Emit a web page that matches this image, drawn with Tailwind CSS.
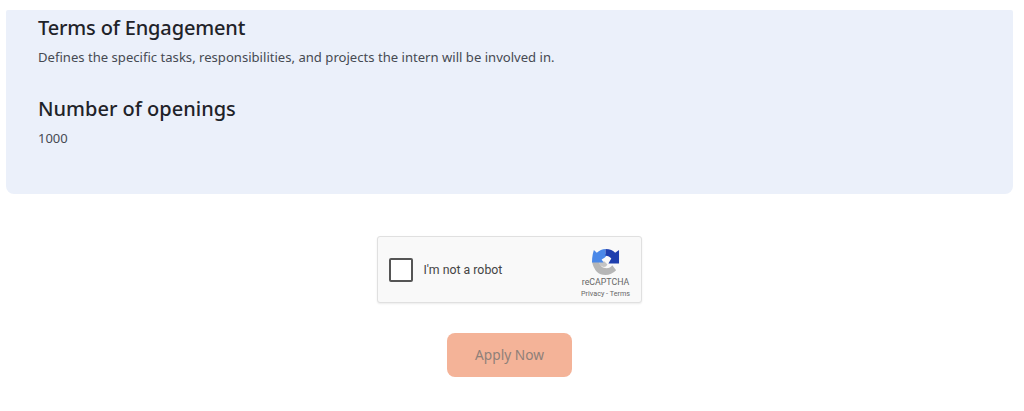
<!doctype html>
<html>
<head>
<meta charset="utf-8">
<script src="https://cdn.jsdelivr.net/npm/@tailwindcss/browser@4"></script>
</head>
<body class="bg-white">
<div class="w-[1024px] h-[411px] overflow-hidden pt-[10px] font-['Noto_Sans',sans-serif]">
  <div class="ml-[6px] w-[1007px] h-[184px] rounded-b-[8px] rounded-t-[2px] bg-[#ebf0fa] px-[32px] pt-[4px]">
    <h2 class="text-[20px] leading-[28px] font-medium tracking-[-0.16px] text-[#1f2329]">Terms of Engagement</h2>
    <p class="mt-[5px] text-[13.100px] leading-[20px] text-[#464a52]">Defines the specific tasks, responsibilities, and projects the intern will be involved in.</p>
    <h2 class="mt-[28px] text-[20px] leading-[28px] font-medium text-[#1f2329]">Number of openings</h2>
    <p class="mt-[5px] text-[13px] leading-[20px] text-[#464a52]">1000</p>
  </div>
  <div class="mt-[42px] flex flex-col items-center">
    <div class="ml-[-6px] w-[265px] h-[67px] flex items-center rounded-[3px] border border-[#e0e0e0] bg-[#f9f9f9] shadow-[0_1px_2px_rgba(0,0,0,0.08)] pl-[11px] pr-[9px] font-['Roboto',sans-serif]">
      <div class="w-[24px] h-[24px] rounded-[2px] border-2 border-[#555555] bg-white"></div>
      <span class="ml-[11px] mt-[1px] text-[12.300px] text-[#444444]">I'm not a robot</span>
      <div class="ml-auto flex flex-col items-center w-[52px] pt-[6px]">
        <svg class="w-[29px] h-[29px]" viewBox="0 0 30 30">
          <path d="M1 15H8Q10 22 16 22Q20 22 22 19L26 24Q21 29 15 29Q4 29 1 15z" fill="#b6b6b6"/>
          <path d="M8 15H14L17 18Q15 22 11 20Q8 18 8 15z" fill="#c4c4c4"/>
          <path d="M3 3L6 6Q10 2 15 2V7Q17 9 14 11L11 13L13 16H1Q1 9 3 3z" fill="#4a88e8"/>
          <path d="M15 2Q22 2 25 6L29 3V17H18L21 12Q19 9 15 9z" fill="#1f3fae"/>
        </svg>
        <span class="mt-[1px] text-[8.800px] leading-[11px] text-[#666666]">reCAPTCHA</span>
        <span class="mt-[1px] text-[7.200px] leading-[9px] text-[#666666]">Privacy - Terms</span>
      </div>
    </div>
    <button class="mt-[30px] ml-[-5px] w-[125px] h-[44px] rounded-[8px] bg-[#f4b398] text-[13.700px] text-[#8f8078] font-['Noto_Sans',sans-serif]">Apply Now</button>
  </div>
</div>
</body>
</html>
